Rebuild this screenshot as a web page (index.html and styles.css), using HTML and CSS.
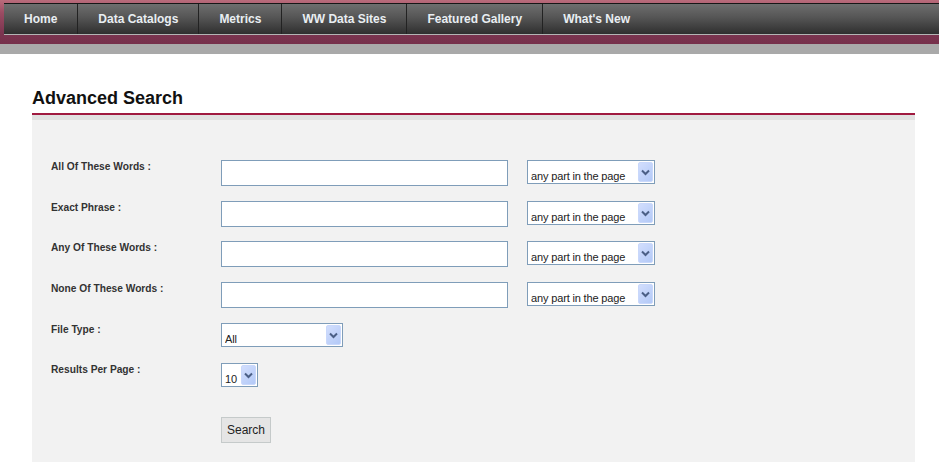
FILE: index.html
```html
<!DOCTYPE html>
<html lang="en">
<head>
<meta charset="utf-8">
<title>Advanced Search</title>
<link rel="stylesheet" href="styles.css">
</head>
<body>
<header class="topbar">
  <nav class="nav">
    <a class="nav-item" href="#">Home</a>
    <a class="nav-item" href="#">Data Catalogs</a>
    <a class="nav-item" href="#">Metrics</a>
    <a class="nav-item" href="#">WW Data Sites</a>
    <a class="nav-item" href="#">Featured Gallery</a>
    <a class="nav-item last" href="#">What's New</a>
  </nav>
</header>
<div class="strip"></div>

<main class="content">
  <h1 class="title">Advanced Search</h1>
  <section class="panel">
    <div class="band"></div>
    <form class="form">
      <div class="row">
        <label class="label">All Of These Words :</label>
        <input class="text" type="text">
        <span class="sel sel-part">
          <select class="sel-box"><option>any part in the page</option></select>
          <span class="arrow"><svg width="13" height="18" viewBox="0 0 13 18"><path d="M3 7.5 L6.5 11 L10 7.5" fill="none" stroke="#4b5f86" stroke-width="2"/></svg></span>
        </span>
      </div>
      <div class="row tight">
        <label class="label">Exact Phrase :</label>
        <input class="text" type="text">
        <span class="sel sel-part">
          <select class="sel-box"><option>any part in the page</option></select>
          <span class="arrow"><svg width="13" height="18" viewBox="0 0 13 18"><path d="M3 7.5 L6.5 11 L10 7.5" fill="none" stroke="#4b5f86" stroke-width="2"/></svg></span>
        </span>
      </div>
      <div class="row">
        <label class="label">Any Of These Words :</label>
        <input class="text" type="text">
        <span class="sel sel-part">
          <select class="sel-box"><option>any part in the page</option></select>
          <span class="arrow"><svg width="13" height="18" viewBox="0 0 13 18"><path d="M3 7.5 L6.5 11 L10 7.5" fill="none" stroke="#4b5f86" stroke-width="2"/></svg></span>
        </span>
      </div>
      <div class="row">
        <label class="label">None Of These Words :</label>
        <input class="text" type="text">
        <span class="sel sel-part">
          <select class="sel-box"><option>any part in the page</option></select>
          <span class="arrow"><svg width="13" height="18" viewBox="0 0 13 18"><path d="M3 7.5 L6.5 11 L10 7.5" fill="none" stroke="#4b5f86" stroke-width="2"/></svg></span>
        </span>
      </div>
      <div class="row tight">
        <label class="label">File Type :</label>
        <span class="sel sel-type">
          <select class="sel-box"><option>All</option></select>
          <span class="arrow"><svg width="13" height="18" viewBox="0 0 13 18"><path d="M3 7.5 L6.5 11 L10 7.5" fill="none" stroke="#4b5f86" stroke-width="2"/></svg></span>
        </span>
      </div>
      <div class="row">
        <label class="label">Results Per Page :</label>
        <span class="sel sel-num">
          <select class="sel-box"><option>10</option></select>
          <span class="arrow"><svg width="13" height="18" viewBox="0 0 13 18"><path d="M3 7.5 L6.5 11 L10 7.5" fill="none" stroke="#4b5f86" stroke-width="2"/></svg></span>
        </span>
      </div>
      <div class="row row-btn">
        <span class="label"></span>
        <button class="btn" type="button">Search</button>
      </div>
    </form>
  </section>
</main>
</body>
</html>
```

FILE: styles.css
```css
html, body {
  margin: 0;
  padding: 0;
  background: #ffffff;
  font-family: "Liberation Sans", Arial, sans-serif;
}

.topbar {
  background: linear-gradient(#b96c7b 0%, #9a4b62 30%, #7b3550 75%, #76304b 100%);
  padding: 3px 0 9px 4px;
}

.nav {
  display: flex;
  height: 30px;
  border-top: 1px solid #161616;
  border-bottom: 1px solid #b4b4b4;
  background: linear-gradient(#6e6e6e, #555555 45%, #2f2f2f);
}

.nav-item {
  display: flex;
  align-items: center;
  padding: 0 20px;
  border-right: 1px solid #222;
  color: #e9eef2;
  font-size: 12px;
  font-weight: bold;
  text-decoration: none;
}

.nav-item.last {
  border-right: none;
}

.strip {
  height: 10px;
  background: #a9a9a9;
}

.content {
  margin: 0 24px 0 32px;
}

.title {
  margin: 34px 0 4px;
  font-size: 18px;
  line-height: 21px;
  font-weight: bold;
  color: #111;
}

.panel {
  border-top: 2px solid #a01a40;
  background: #f2f2f2;
}

.band {
  height: 5px;
  background: #e1e1e1;
}

.form {
  padding: 40px 19px 19px;
}

.row {
  display: flex;
  align-items: flex-start;
  height: 26px;
  margin-bottom: 15px;
}

.row.tight {
  margin-bottom: 14px;
}

.row-btn {
  margin-top: 28px;
  margin-bottom: 0;
}

.label {
  width: 170px;
  flex: none;
  padding-top: 0;
  font-size: 10.2px;
  line-height: 13px;
  font-weight: bold;
  color: #333;
}

.text {
  box-sizing: border-box;
  width: 287px;
  height: 26px;
  margin: 0;
  border: 1px solid #7f9db9;
  background: #fff;
}

.sel {
  position: relative;
  display: block;
  height: 24px;
}

.sel-part {
  width: 128px;
  margin-left: 19px;
}

.sel-type {
  width: 122px;
}

.sel-num {
  width: 37px;
}

.sel-box {
  appearance: none;
  -webkit-appearance: none;
  box-sizing: border-box;
  width: 100%;
  height: 24px;
  margin: 0;
  padding: 7px 0 0 3px;
  border: 1px solid #7f9db9;
  border-radius: 0;
  background: #fff;
  font-family: "Liberation Sans", Arial, sans-serif;
  font-size: 11px;
  letter-spacing: -0.15px;
  line-height: 14px;
  color: #222;
  outline: none;
}

.arrow {
  position: absolute;
  top: 2px;
  right: 2px;
  width: 13px;
  height: 18px;
  border: 1px solid #c9d8fb;
  border-radius: 2px;
  background: linear-gradient(135deg, #d2defd, #b3c9f7);
  pointer-events: none;
}

.arrow svg {
  display: block;
}

.btn {
  box-sizing: border-box;
  width: 50px;
  height: 26px;
  margin: 0;
  padding: 0;
  border: 1px solid #c5caca;
  background: #e5e5e5;
  font-family: "Liberation Sans", Arial, sans-serif;
  font-size: 12px;
  color: #222;
}
```
